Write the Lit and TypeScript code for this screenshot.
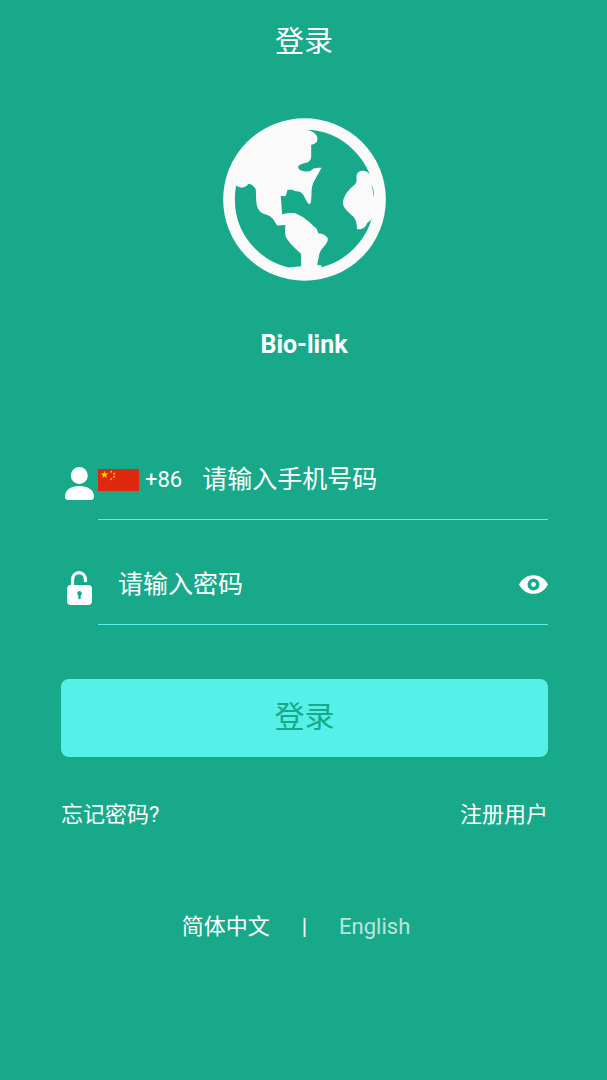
import { LitElement, html, css, svg } from "lit";
import { customElement, state } from "lit/decorators.js";

const globe = svg`
  <svg class="globe" viewBox="28 25 488 488" aria-hidden="true">
    <circle cx="272" cy="269" r="226" fill="none" stroke="#fafafa" stroke-width="35"/>
    <g fill="#fafafa">
      <path d="M40 225 C45 120 150 40 275 40 L278 61 C291 62 304 69 309 79 C314 91 308 104 292 105 L292 142 C290 155 283 159 268 161 C256 164 251 169 254 176 C259 184 276 187 290 184 C298 174 307 174 323 174 L302 212 C294 225 293 238 293 254 C292 270 292 282 287 283 C279 279 275 267 270 258 C263 246 258 244 246 244 C237 240 229 239 222 240 C218 245 219 257 214 259 L201 258 L205 313 C218 310 230 308 244 310 C266 318 285 334 309 357 L313 370 C327 371 339 377 342 387 C341 404 323 412 317 430 L310 465 L323 466 L322 471 L325 490 L215 490 L230 472 L262 469 L262 432 C246 417 226 399 216 381 C212 367 214 356 215 345 L190 347 C184 338 180 327 172 322 C162 313 146 315 137 303 C125 286 128 264 126 238 C121 228 112 223 104 222 C98 232 87 235 78 232 L67 228 Z"/>
      <path d="M471 200 C464 188 457 183 445 183 C431 184 426 194 428 208 C429 218 424 224 416 230 C402 242 387 261 387 280 C389 296 403 306 418 320 C427 331 429 343 429 357 C444 361 455 351 460 339 L471 330 L490 290 L488 230 Z"/>
    </g>
    <path d="M473 225 C479 237 481 250 479 262 C478 250 476 238 473 225 Z" fill="#18a98b"/>
  </svg>`;

const userIcon = svg`
  <svg class="user" viewBox="0 0 29 33" aria-hidden="true">
    <circle cx="14.3" cy="8.5" r="8.5" fill="#fff"/>
    <path d="M0 29.5 C0 23 6 19 14.3 19 S29 23 29 29.5 Q29 33 25.5 33 H3.5 Q0 33 0 29.5 Z" fill="#fff"/>
  </svg>`;

const lockIcon = svg`
  <svg class="lock" viewBox="0 0 25 34" aria-hidden="true">
    <path d="M5.500 15 V9.500 C5.500 4.500 8.200 1.700 12 1.700 C15.800 1.700 18.500 4.500 18.500 9.500 V11" fill="none" stroke="#fff" stroke-width="3.200"/>
    <path fill-rule="evenodd" fill="#fff" d="M4 14 H21 Q25 14 25 18 V30 Q25 34 21 34 H4 Q0 34 0 30 V18 Q0 14 4 14 Z M12.500 20 A2.500 2.500 0 0 0 11.300 24.600 V27.500 Q12.500 29.200 13.700 27.500 V24.600 A2.500 2.500 0 0 0 12.500 20 Z"/>
  </svg>`;

const eyeIcon = svg`
  <svg class="eye" viewBox="0 0 29 19" aria-hidden="true">
    <path d="M0 9.500 C3 3.500 8.500 0.200 14.500 0.200 S26 3.500 29 9.500 C26 15.500 20.500 18.800 14.500 18.800 S3 15.500 0 9.500 Z" fill="#fff"/>
    <circle cx="14.500" cy="9.500" r="4.200" fill="#fff" stroke="#18a98b" stroke-width="3.600"/>
  </svg>`;

const star = "M0 -1 L.225 -.309 .951 -.309 .363 .118 .588 .809 0 .382 -.588 .809 -.363 .118 -.951 -.309 -.225 -.309 Z";

const flag = svg`
  <svg class="flag" viewBox="0 0 41 22" aria-hidden="true">
    <rect width="41" height="22" fill="#de2910"/>
    <g fill="#ffde00">
      <path d=${star} transform="translate(6.500 5.700) scale(4)"/>
      <path d=${star} transform="translate(13.200 2.600) scale(1.500)"/>
      <path d=${star} transform="translate(16.200 4.800) scale(1.500)"/>
      <path d=${star} transform="translate(16.200 7.800) scale(1.500)"/>
      <path d=${star} transform="translate(13.200 10.200) scale(1.500)"/>
    </g>
  </svg>`;

@customElement("app-root")
export class AppRoot extends LitElement {
  @state() private showPassword = false;

  static styles = css`
    :host {
      display: block;
      min-height: 100vh;
      padding-left: 1px;
      box-sizing: border-box;
      background: #18a98b;
      color: #fff;
      font-family: Roboto, "Noto Sans CJK SC", sans-serif;
      font-size: 22px;
      line-height: 30px;
    }
    * { box-sizing: border-box; }
    button, input { font: inherit; color: inherit; background: none; border: 0; padding: 0; margin: 0; }
    button { cursor: pointer; }
    a { color: inherit; text-decoration: none; }
    svg { display: block; flex: none; }
    .header { height: 84px; display: flex; align-items: center; justify-content: center; }
    .title { margin: 0; font-size: 29px; font-weight: 400; }
    .brand { display: flex; flex-direction: column; align-items: center; gap: 49px; padding-top: 34px; }
    .globe { width: 163px; height: 163px; }
    .name { margin: 0; font-size: 25px; font-weight: 700; }
    .form { padding: 80px 59px 0 60px; display: flex; flex-direction: column; }
    .row { display: grid; grid-template-columns: 37px 1fr; margin-bottom: 25px; }
    .icon { display: flex; align-items: center; justify-content: center; padding-top: 6px; }
    .user { width: 29px; height: 33px; }
    .lock { width: 25px; height: 34px; }
    .flag { width: 41px; height: 22px; }
    .eye { width: 29px; height: 19px; }
    .field { display: flex; align-items: center; height: 80px; border-bottom: 1px solid #55f0e8; min-width: 0; }
    .code { display: flex; align-items: center; gap: 6px; }
    .input { flex: 1; min-width: 0; height: 40px; padding-left: 20px; font-size: 25px; outline: none; }
    .input::placeholder { color: #fff; opacity: 1; }
    .submit { height: 78px; margin-top: 29px; border-radius: 8px; background: #55f0e8; color: #18a98b; font-size: 30px; padding-bottom: 3px; }
    .links { display: flex; justify-content: space-between; padding: 43px 59px 0 60px; }
    .languages { display: flex; justify-content: center; gap: 32px; padding: 82px 16px 32px 0; }
    .muted { opacity: 0.7; }
  `;

  render() {
    return html`
      <header class="header"><h1 class="title">登录</h1></header>
      <main>
        <section class="brand">
          ${globe}
          <h2 class="name">Bio-link</h2>
        </section>
        <form class="form" @submit=${(e: Event) => e.preventDefault()}>
          <div class="row">
            <label class="icon" for="phone">${userIcon}</label>
            <div class="field">
              <button class="code" type="button">${flag}<span>+86</span></button>
              <input class="input" id="phone" type="tel" aria-label="手机号码" placeholder="请输入手机号码" />
            </div>
          </div>
          <div class="row">
            <label class="icon" for="password">${lockIcon}</label>
            <div class="field">
              <input class="input" id="password" type=${this.showPassword ? "text" : "password"}
                aria-label="密码" placeholder="请输入密码" />
              <button type="button" aria-label="显示密码" @click=${() => (this.showPassword = !this.showPassword)}>${eyeIcon}</button>
            </div>
          </div>
          <button class="submit" type="submit">登录</button>
        </form>
        <nav class="links"><a href="#forgot">忘记密码?</a><a href="#register">注册用户</a></nav>
        <div class="languages">
          <button type="button">简体中文</button>
          <span>|</span>
          <button class="muted" type="button">English</button>
        </div>
      </main>
    `;
  }
}
